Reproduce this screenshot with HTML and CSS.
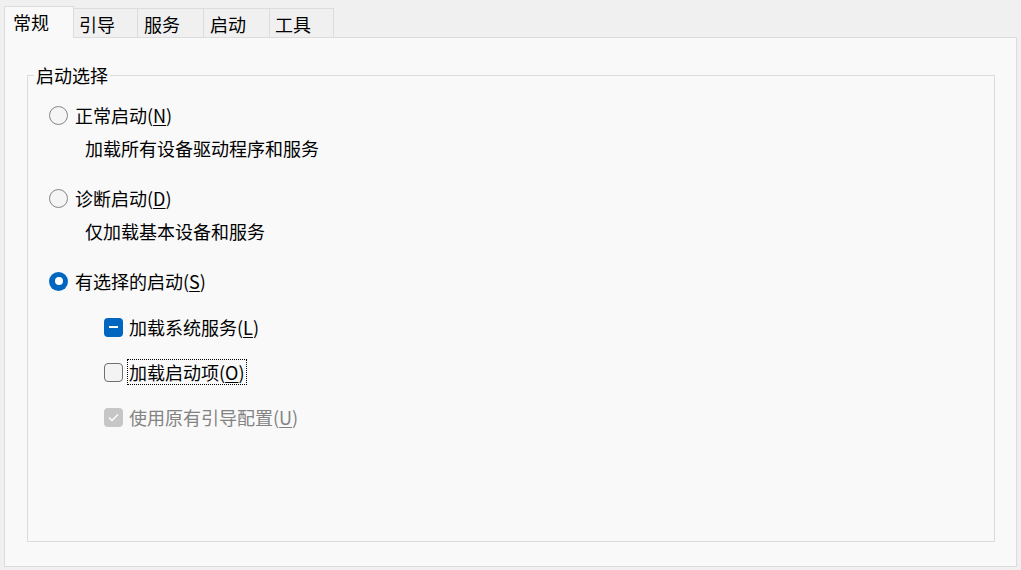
FILE: index.html
```html
<!DOCTYPE html>
<html lang="zh-CN">
<head>
  <meta charset="UTF-8" />
  <title>系统配置</title>
  <link rel="stylesheet" href="styles.css">
</head>
<body>
  <!-- 选项卡 -->
  <div class="tabs">
    <div class="tab active">常规</div>
    <div class="tab">引导</div>
    <div class="tab wide">服务</div>
    <div class="tab wide">启动</div>
    <div class="tab">工具</div>
  </div>

  <!-- 常规页 -->
  <div class="panel">
    <fieldset class="group">
      <legend>启动选择</legend>

      <div class="option radio-row">
        <span class="radio"></span>
        <span class="label">正常启动(<u>N</u>)</span>
      </div>
      <div class="desc">加载所有设备驱动程序和服务</div>

      <div class="option radio-row second">
        <span class="radio"></span>
        <span class="label">诊断启动(<u>D</u>)</span>
      </div>
      <div class="desc">仅加载基本设备和服务</div>

      <div class="option radio-row second">
        <span class="radio checked"></span>
        <span class="label">有选择的启动(<u>S</u>)</span>
      </div>

      <div class="option check-row">
        <span class="check mixed"></span>
        <span class="label">加载系统服务(<u>L</u>)</span>
      </div>
      <div class="option check-row">
        <span class="check"></span>
        <span class="label focus">加载启动项(<u>O</u>)</span>
      </div>
      <div class="option check-row disabled">
        <span class="check done">
          <svg width="11" height="9" viewBox="0 0 11 9"><path d="M1 4.5 L4 7.5 L10 1.5" fill="none" stroke="#fff" stroke-width="1.3"/></svg>
        </span>
        <span class="label">使用原有引导配置(<u>U</u>)</span>
      </div>
    </fieldset>
  </div>
</body>
</html>
```

FILE: styles.css
```css
:root {
  --page-bg: #f0f0f0;
  --panel-bg: #f9f9f9;
  --line: #dcdcdc;
  --accent: #0067c0;
  --text: #000000;
  --text-disabled: #838383;
}

* {
  box-sizing: border-box;
  margin: 0;
  padding: 0;
}

body {
  font-family: "Noto Sans CJK SC", "Noto Sans", sans-serif;
  font-size: 18px;
  line-height: 24px;
  background-color: var(--page-bg);
  color: var(--text);
  width: 1021px;
  height: 570px;
  overflow: hidden;
}

/* 选项卡 */
.tabs {
  display: flex;
  align-items: flex-end;
  height: 37px;
  padding-left: 4px;
}

.tab {
  height: 29px;
  width: 65px;
  padding: 3px 0 0 5px;
  border: 1px solid var(--line);
  border-bottom: none;
  margin-left: -1px;
  background-color: var(--page-bg);
}

.tab.wide {
  width: 67px;
  padding-left: 6px;
}

.tab.active {
  height: 32px;
  width: 70px;
  margin: 0 0 -1px 0;
  padding: 3px 0 0 8px;
  background-color: var(--panel-bg);
  position: relative;
  z-index: 1;
}

/* 面板 */
.panel {
  margin-left: 4px;
  width: 1013px;
  height: 530px;
  background-color: var(--panel-bg);
  border: 1px solid var(--line);
  padding: 25px 0 0 22px;
}

.group {
  width: 968px;
  height: 479px;
  border: 1px solid var(--line);
  padding: 0;
}

.group legend {
  margin-left: 6px;
  padding: 0 2px;
  line-height: 24px;
}

.option {
  display: flex;
  align-items: center;
  height: 24px;
}

.radio-row {
  margin-top: 16px;
  padding-left: 21px;
  gap: 7px;
}

.radio-row.second {
  margin-top: 26px;
}

.desc {
  margin-top: 9px;
  padding-left: 57px;
}

.radio {
  width: 19px;
  height: 19px;
  border-radius: 50%;
  border: 1px solid #858585;
  background-color: #f5f5f5;
}

.radio.checked {
  border: none;
  background-color: var(--accent);
  display: flex;
  align-items: center;
  justify-content: center;
}

.radio.checked::after {
  content: "";
  width: 8px;
  height: 8px;
  border-radius: 50%;
  background-color: #fff;
}

.check-row {
  margin-top: 22px;
  padding-left: 76px;
  gap: 6px;
}

.check-row + .check-row {
  margin-top: 21px;
}

.check {
  width: 19px;
  height: 19px;
  border-radius: 4px;
  border: 1px solid #707070;
  background-color: #f3f3f3;
  display: flex;
  align-items: center;
  justify-content: center;
}

.check.mixed {
  border: none;
  background-color: var(--accent);
}

.check.mixed::after {
  content: "";
  width: 9px;
  height: 2px;
  background-color: #fff;
}

.check.done {
  border: none;
  background-color: #c6c6c6;
}

.label.focus {
  margin-left: -2px;
  padding: 0 1px;
  border: 1px dotted #000;
  line-height: 24px;
}

.disabled {
  color: var(--text-disabled);
}

u {
  text-underline-offset: 2px;
}
```
